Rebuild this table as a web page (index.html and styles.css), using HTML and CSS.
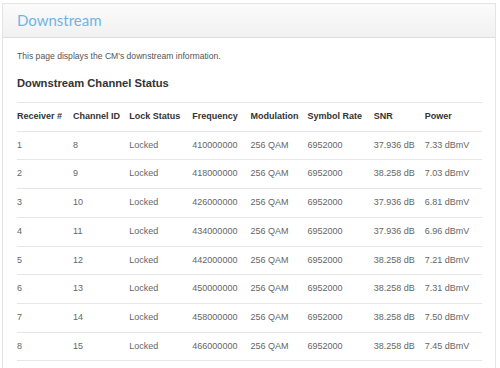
FILE: index.html
```html
<!DOCTYPE html>
<html lang="en">
<head>
    <meta charset="UTF-8">
    <title>Downstream</title>
    <link rel="stylesheet" href="styles.css">
</head>
<body>
    <div class="panel">
        <div class="panel-header">
            <h1>Downstream</h1>
        </div>
        <div class="panel-body">
            <p class="intro">This page displays the CM's downstream information.</p>
            <h2>Downstream Channel Status</h2>
            <table class="channels">
                <thead>
                    <tr>
                        <th class="col-recv">Receiver #</th>
                        <th class="col-chan">Channel ID</th>
                        <th class="col-lock">Lock Status</th>
                        <th class="col-freq">Frequency</th>
                        <th class="col-mod">Modulation</th>
                        <th class="col-sym">Symbol Rate</th>
                        <th class="col-snr">SNR</th>
                        <th class="col-pow">Power</th>
                    </tr>
                </thead>
                <tbody>
                    <tr><td>1</td><td>8</td><td>Locked</td><td>410000000</td><td>256 QAM</td><td>6952000</td><td>37.936 dB</td><td>7.33 dBmV</td></tr>
                    <tr><td>2</td><td>9</td><td>Locked</td><td>418000000</td><td>256 QAM</td><td>6952000</td><td>38.258 dB</td><td>7.03 dBmV</td></tr>
                    <tr><td>3</td><td>10</td><td>Locked</td><td>426000000</td><td>256 QAM</td><td>6952000</td><td>37.936 dB</td><td>6.81 dBmV</td></tr>
                    <tr><td>4</td><td>11</td><td>Locked</td><td>434000000</td><td>256 QAM</td><td>6952000</td><td>37.936 dB</td><td>6.96 dBmV</td></tr>
                    <tr><td>5</td><td>12</td><td>Locked</td><td>442000000</td><td>256 QAM</td><td>6952000</td><td>38.258 dB</td><td>7.21 dBmV</td></tr>
                    <tr><td>6</td><td>13</td><td>Locked</td><td>450000000</td><td>256 QAM</td><td>6952000</td><td>38.258 dB</td><td>7.31 dBmV</td></tr>
                    <tr><td>7</td><td>14</td><td>Locked</td><td>458000000</td><td>256 QAM</td><td>6952000</td><td>38.258 dB</td><td>7.50 dBmV</td></tr>
                    <tr><td>8</td><td>15</td><td>Locked</td><td>466000000</td><td>256 QAM</td><td>6952000</td><td>38.258 dB</td><td>7.45 dBmV</td></tr>
                </tbody>
            </table>
        </div>
    </div>
</body>
</html>
```

FILE: styles.css
```css
* {
    box-sizing: border-box;
}

body {
    margin: 0;
    padding: 3px 0 0 2px;
    background: #fff;
    font-family: 'Liberation Sans', Arial, sans-serif;
    color: #333;
}

.panel {
    width: 494px;
    border: 1px solid #e4e4e4;
    background: #fff;
}

.panel-header {
    height: 34px;
    padding: 0 14px;
    background: linear-gradient(to bottom, #fbfbfb, #f1f1f1);
    border-bottom: 1px solid #dcdcdc;
}

h1 {
    margin: 0;
    font-family: Lato, sans-serif;
    font-weight: 400;
    font-size: 15px;
    line-height: 33px;
    color: #72b4e4;
}

.panel-body {
    padding: 0 13px 20px 14px;
}

.intro {
    margin: 0;
    padding-top: 12px;
    font-size: 8.6px;
    line-height: 13px;
    color: #555;
}

h2 {
    margin: 0;
    padding: 13px 0 12px;
    font-size: 11.2px;
    line-height: 14px;
    font-weight: bold;
    color: #333;
}

.channels {
    width: 100%;
    border-collapse: collapse;
    table-layout: fixed;
    font-size: 9px;
}

.channels th,
.channels td {
    text-align: left;
    padding: 5px 0;
    line-height: 17.7px;
    border-top: 1px solid #e6e6e6;
}

.channels tbody tr:last-child td {
    border-bottom: 1px solid #e6e6e6;
}

.channels th {
    font-weight: bold;
    color: #333;
}

.channels td {
    color: #666;
}

.col-recv { width: 56px; }
.col-chan { width: 56px; }
.col-lock { width: 63px; }
.col-freq { width: 58px; }
.col-mod { width: 57px; }
.col-sym { width: 66px; }
.col-snr { width: 51px; }
.col-pow { width: 57px; }
```
